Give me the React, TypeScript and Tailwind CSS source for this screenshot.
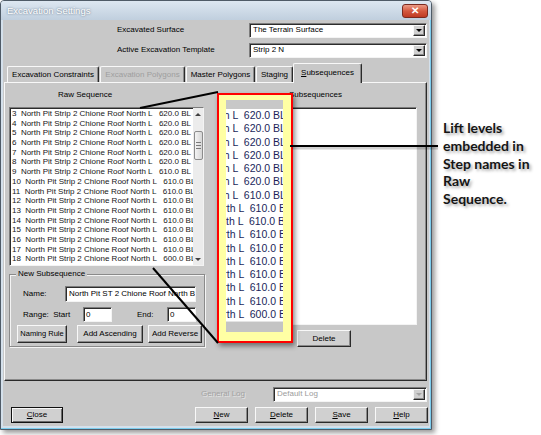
import React from "react";

const rows = [3, 4, 5, 6, 7, 8, 9, 10, 11, 12, 13, 14, 15, 16, 17, 18].map((n) => ({
  n,
  lvl: n <= 8 ? "620.0" : n <= 17 ? "610.0" : "600.0",
}));

const raised =
  "bg-[#d0d0d0] border border-t-[#f8f8f8] border-l-[#f8f8f8] border-r-[#2a2a2a] border-b-[#2a2a2a] shadow-[inset_-1px_-1px_0_#8a8a8a]";
const sunken =
  "bg-white border border-t-[#7c7c7c] border-l-[#7c7c7c] border-r-[#f4f4f4] border-b-[#f4f4f4] shadow-[inset_1px_1px_0_#2c2c2c]";

function Btn({ children, className = "" }: { children: React.ReactNode; className?: string }) {
  return (
    <div className={`${raised} flex items-center justify-center leading-none whitespace-nowrap ${className}`}>
      {children}
    </div>
  );
}

function Combo({ text, disabled = false, className = "" }: { text: string; disabled?: boolean; className?: string }) {
  return (
    <div className={`${sunken} h-[15px] flex items-center pl-[3px] pr-[1px] ${className}`}>
      <span className={`flex-1 whitespace-nowrap overflow-hidden text-[8px] leading-none ${disabled ? "text-[#9c9c9c]" : "text-black"}`}>
        {text}
      </span>
      <div className={`w-[12px] h-[11px] ${raised} flex items-center justify-center`}>
        <div
          className={`w-0 h-0 border-l-[3px] border-r-[3px] border-t-[3px] border-l-transparent border-r-transparent ${
            disabled ? "border-t-[#a4a4a4]" : "border-t-black"
          }`}
        />
      </div>
    </div>
  );
}

function Tab({ children, className = "", disabled = false }: { children: React.ReactNode; className?: string; disabled?: boolean }) {
  return (
    <div
      className={`h-[16px] flex items-center justify-center text-[8px] leading-none border-t border-l border-r border-t-[#f8f8f8] border-l-[#f8f8f8] border-r-[#2a2a2a] rounded-t-[2px] shadow-[inset_-1px_0_0_#8a8a8a] ${
        disabled ? "text-[#9e9e9e]" : "text-black"
      } ${className}`}
    >
      {children}
    </div>
  );
}

function Scrollbar() {
  return (
    <div className="w-[10px] bg-[#ececec] flex flex-col items-center">
      <div className="h-[12px] flex items-center justify-center">
        <div className="w-0 h-0 border-l-[3px] border-r-[3px] border-b-[3px] border-l-transparent border-r-transparent border-b-[#404040]" />
      </div>
      <div className="mt-[11px] w-[9px] h-[29px] rounded-[2px] border border-[#8c8c8c] bg-gradient-to-r from-[#f4f4f4] to-[#d6d6d6] flex flex-col items-center justify-center gap-[2px]">
        <div className="w-[5px] h-px bg-[#7a7a7a]" />
        <div className="w-[5px] h-px bg-[#7a7a7a]" />
        <div className="w-[5px] h-px bg-[#7a7a7a]" />
      </div>
      <div className="flex-1" />
      <div className="h-[12px] flex items-center justify-center">
        <div className="w-0 h-0 border-l-[3px] border-r-[3px] border-t-[3px] border-l-transparent border-r-transparent border-t-[#404040]" />
      </div>
    </div>
  );
}

export default function App() {
  return (
    <div className="relative w-[541px] h-[435px] bg-white overflow-hidden flex items-start font-['Liberation_Sans',Arial,sans-serif] text-black">
      {/* Dialog window */}
      <div className="w-[432px] h-[430px] flex flex-col border border-[#4f5b67] bg-[#d4e0eb] rounded-t-[4px] shadow-[3px_3px_5px_rgba(0,0,0,0.4),inset_-1px_-1px_0_#7ccdee]">
        {/* Title bar */}
        <div className="h-[19px] flex items-center justify-between pl-[6px] pr-[3px] rounded-t-[3px] bg-gradient-to-b from-[#dde7f1] to-[#c0cfde]">
          <span className="text-[9.5px] leading-none text-white [text-shadow:0_0_2px_rgba(70,90,110,0.9)]">
            Excavation Settings
          </span>
          <div className="w-[26px] h-[14px] rounded-[3px] border border-[#7a2a20] bg-gradient-to-b from-[#eb9a86] via-[#d4583f] to-[#bf3a24] flex items-center justify-center text-white text-[10px] font-bold leading-none">
            ✕
          </div>
        </div>

        {/* Client area */}
        <div className="flex-1 mx-[2px] mb-[3px] bg-[#c8c8c8] flex flex-col">
          <div className="flex items-center h-[14px] mt-[3px]">
            <span className="ml-[114px] w-[132px] text-[8px] leading-none">Excavated Surface</span>
            <Combo text="The Terrain Surface" className="w-[178px]" />
          </div>
          <div className="flex items-center h-[14px] mt-[6px]">
            <span className="ml-[114px] w-[132px] text-[8px] leading-none">Active Excavation Template</span>
            <Combo text="Strip 2 N" className="w-[178px]" />
          </div>

          {/* Tabs */}
          <div className="flex items-end h-[19px] mt-[6px] ml-[4px]">
            <Tab className="w-[92px] mr-[1px]">Excavation Constraints</Tab>
            <Tab className="w-[85px] mr-[1px]" disabled>
              Excavation Polygons
            </Tab>
            <Tab className="w-[69px] mr-[1px]">Master Polygons</Tab>
            <Tab className="w-[37px]">Staging</Tab>
            <div className="relative z-10 w-[69px] h-[20px] -mb-[1px] bg-[#c8c8c8] border-t border-l border-r border-t-[#f8f8f8] border-l-[#f8f8f8] border-r-[#2a2a2a] rounded-t-[2px] shadow-[inset_-1px_0_0_#8a8a8a] flex items-start justify-center pt-[5px] text-[8px] leading-none">
              <span>
                <span className="underline">S</span>ubsequences
              </span>
            </div>
          </div>

          {/* Tab panel */}
          <div className="h-[299px] ml-[1px] mr-[2px] border border-t-[#f8f8f8] border-l-[#f8f8f8] border-r-[#2a2a2a] border-b-[#2a2a2a] shadow-[inset_-1px_-1px_0_#8a8a8a] flex">
            {/* Left column */}
            <div className="ml-[4px] w-[196px] flex flex-col">
              <div className="h-[12px] mt-[6px] flex items-center">
                <span className="ml-[49px] text-[8px] leading-none">Raw Sequence</span>
              </div>
              <div className={`${sunken} mt-[6px] w-[195px] h-[159px] flex`}>
                <div className="flex-1 overflow-hidden pl-[2px] pt-[1px]">
                  {rows.map((r) => (
                    <div key={r.n} className="h-[9.7px] leading-[9.7px] text-[8px] whitespace-pre text-[#161616]">
                      {`${r.n}  North Pit Strip 2 Chione Roof North L   ${r.lvl} BL`}
                    </div>
                  ))}
                </div>
                <Scrollbar />
              </div>

              <fieldset className="mt-[3px] w-[196px] border border-[#8a8a8a] shadow-[1px_1px_0_#f4f4f4,inset_1px_1px_0_#f4f4f4] pb-[3px]">
                <legend className="ml-[6px] px-[2px] bg-[#c8c8c8] text-[8px] leading-[10px]">New Subsequence</legend>
                <div className="flex items-center h-[16px] mt-[7px]">
                  <span className="ml-[13px] w-[42px] text-[8px] leading-none">Name:</span>
                  <div className={`${sunken} w-[131px] h-[16px] flex items-center pl-[3px] overflow-hidden`}>
                    <span className="text-[8px] leading-none whitespace-nowrap">North Pit ST 2 Chione Roof North BL</span>
                  </div>
                </div>
                <div className="flex items-center h-[15px] mt-[5px]">
                  <span className="ml-[13px] w-[60px] text-[8px] leading-none whitespace-pre">Range:  Start</span>
                  <div className={`${sunken} w-[29px] h-[15px] flex items-center pl-[2px]`}>
                    <span className="text-[8px] leading-none">0</span>
                  </div>
                  <span className="ml-[25px] w-[30px] text-[8px] leading-none">End:</span>
                  <div className={`${sunken} w-[29px] h-[15px] flex items-center pl-[2px]`}>
                    <span className="text-[8px] leading-none">0</span>
                  </div>
                </div>
                <div className="flex items-center h-[18px] mt-[3px]">
                  <Btn className="ml-[7px] w-[50px] h-[18px] text-[7.5px]">Naming Rule</Btn>
                  <Btn className="ml-[10px] w-[66px] h-[18px] text-[8px]">Add Ascending</Btn>
                  <Btn className="ml-[5px] w-[54px] h-[18px] text-[8px]">Add Reverse</Btn>
                </div>
              </fieldset>
            </div>

            {/* Right column */}
            <div className="ml-[77px] w-[135px] flex flex-col">
              <div className="h-[12px] mt-[6px] flex items-center">
                <span className="ml-[7px] text-[8px] leading-none">Subsequences</span>
              </div>
              <div className={`${sunken} mt-[6px] w-[135px] h-[218px]`} />
              <Btn className="mt-[5px] ml-[15px] w-[54px] h-[17px] text-[8px]">Delete</Btn>
            </div>
          </div>

          {/* General log row */}
          <div className="flex items-center h-[14px] mt-[6px]">
            <div className="flex-1" />
            <span className="text-[8px] leading-none text-[#a2a2a2] [text-shadow:1px_1px_0_#e4e4e4]">General Log</span>
            <Combo text="Default Log" disabled className="ml-[28px] mr-[2px] w-[154px] h-[14px]" />
          </div>

          {/* Buttons row */}
          <div className="flex items-center h-[16px] mt-[6px]">
            <div className="ml-[8px] w-[52px] h-[16px] border border-[#111] bg-[#d0d0d0] shadow-[inset_1px_1px_0_#f8f8f8,inset_-1px_-1px_0_#6a6a6a] flex items-center justify-center text-[8px] leading-none">
              <span>
                <span className="underline">C</span>lose
              </span>
            </div>
            <div className="flex-1" />
            <Btn className="w-[53px] h-[16px] text-[8px]">
              <span>
                <span className="underline">N</span>ew
              </span>
            </Btn>
            <Btn className="ml-[7px] w-[53px] h-[16px] text-[8px]">
              <span>
                <span className="underline">D</span>elete
              </span>
            </Btn>
            <Btn className="ml-[7px] w-[53px] h-[16px] text-[8px]">
              <span>
                <span className="underline">S</span>ave
              </span>
            </Btn>
            <Btn className="ml-[7px] mr-[1px] w-[53px] h-[16px] text-[8px]">
              <span>
                <span className="underline">H</span>elp
              </span>
            </Btn>
          </div>
        </div>
      </div>

      {/* Annotation text */}
      <div className="ml-[11px] mt-[119px] whitespace-nowrap text-[14px] leading-[17.8px] font-bold font-['Lato',sans-serif] text-[#151515] [text-shadow:2px_2px_3px_rgba(0,0,0,0.35)]">
        Lift levels
        <br />
        embedded in
        <br />
        Step names in
        <br />
        Raw
        <br />
        Sequence.
      </div>

      {/* Magnified callout */}
      <div className="absolute left-[217px] top-[93px] w-[76px] h-[250px] border-2 border-[#ff0000] bg-[#ffffa4] shadow-[2px_3px_5px_rgba(0,0,0,0.45)] pt-[5px] pl-[7px]">
        <div className="w-[57px] flex flex-col">
          <div className="h-[9px] bg-[#c8c8c8]" />
          <div className="h-[212px] bg-white overflow-hidden">
            {rows.map((r) => (
              <div key={r.n} className="h-[13.25px] leading-[13.25px] whitespace-pre overflow-hidden text-[10.5px] text-[#1b1f5a]">
                <span className="inline-block -ml-[172px]">{`${r.n}  North Pit Strip 2 Chione Roof North L  ${r.lvl} BL`}</span>
              </div>
            ))}
          </div>
          <div className="h-[11px] bg-[#c4c4c4] border-t border-[#e4e4e4]" />
        </div>
      </div>

      {/* Callout lines */}
      <svg className="absolute left-0 top-0 pointer-events-none" width="541" height="435" viewBox="0 0 541 435">
        <line x1="292" y1="148" x2="438" y2="148" stroke="rgba(0,0,0,0.18)" strokeWidth="3" />
        <line x1="140" y1="108" x2="218" y2="92" stroke="#000" strokeWidth="2" />
        <line x1="153" y1="268" x2="218" y2="343" stroke="#000" strokeWidth="2" />
        <line x1="290" y1="146" x2="438" y2="146" stroke="#000" strokeWidth="2" />
      </svg>
    </div>
  );
}
